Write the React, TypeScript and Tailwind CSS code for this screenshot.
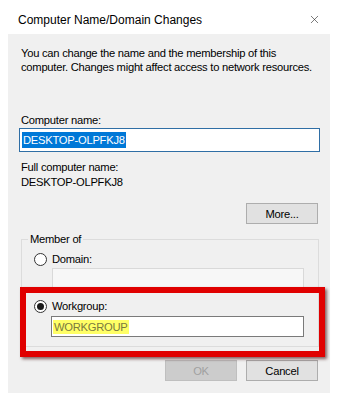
import { X } from 'lucide-react'

function Radio({ checked }: { checked?: boolean }) {
  return (
    <span className="flex h-[13px] w-[13px] items-center justify-center rounded-full border border-[#333333] bg-white">
      {checked && <span className="h-[7px] w-[7px] rounded-full bg-[#1a1a1a]" />}
    </span>
  )
}

function Button({ label, disabled }: { label: string; disabled?: boolean }) {
  return (
    <button
      disabled={disabled}
      className={
        disabled
          ? 'flex h-[21px] w-[72px] items-center justify-center border border-[#bfbfbf] bg-[#cccccc] text-[#a0a0a0]'
          : 'flex h-[21px] w-[72px] items-center justify-center border border-[#adadad] bg-[#e1e1e1] text-black'
      }
    >
      {label}
    </button>
  )
}

export default function App() {
  return (
    <div
      className="relative h-[402px] w-[339px] bg-white pl-[8px] pt-[5px] text-[11.2px] leading-[14px] tracking-[-0.25px] text-black"
      style={{ fontFamily: '"Liberation Sans", Arial, sans-serif' }}
    >
      <div className="flex w-[322px] flex-col">
        {/* title bar */}
        <div className="flex h-[29px] items-center justify-between bg-white pl-[10px] pr-[9px]">
          <span className="text-[12px] tracking-normal">Computer Name/Domain Changes</span>
          <X size={13} strokeWidth={1.1} className="text-[#222]" />
        </div>

        {/* body */}
        <div className="flex h-[359px] flex-col bg-[#f0f0f0] pl-[13px] pr-[12px] pt-[12px]">
          <p className="whitespace-nowrap">
            You can change the name and the membership of this
            <br />
            computer. Changes might affect access to network resources.
          </p>

          <div className="mt-[39px]">Computer name:</div>
          <div className="-ml-[2px] mt-[1px] flex h-[24px] w-[301px] items-center border border-[#2f6ea5] bg-white pl-[2px]">
            <span className="bg-[#0078d7] px-[1px] leading-[16px] text-white">DESKTOP-OLPFKJ8</span>
          </div>

          <div className="mt-[8px]">Full computer name:</div>
          <div className="mt-[1px]">DESKTOP-OLPFKJ8</div>

          <div className="mt-[14px] flex justify-end">
            <Button label="More..." />
          </div>

          <fieldset className="mt-[8px] w-[298px] border border-[#dcdcdc] pb-[9px]">
            <legend className="ml-[6px] px-[2px]">Member of</legend>
            <label className="ml-[12px] mt-[6px] flex items-center gap-[5px]">
              <Radio />
              <span>Domain:</span>
            </label>
            <div className="ml-[30px] mt-[2px] h-[21px] w-[252px] border border-[#d9d9d9] bg-[#f7f7f7]" />
            <label className="ml-[12px] mt-[10px] flex items-center gap-[5px]">
              <Radio checked />
              <span>Workgroup:</span>
            </label>
            <div className="ml-[29px] mt-[3px] flex h-[21px] w-[253px] items-center border border-[#7a7a7a] bg-white pl-[1px]">
              <span className="bg-[#ffff66] px-[1px] leading-[14px] text-[#7a7a3e]">WORKGROUP</span>
            </div>
          </fieldset>

          <div className="mt-[13px] flex justify-end gap-[9px]">
            <Button label="OK" disabled />
            <Button label="Cancel" />
          </div>
        </div>
      </div>

      {/* red annotation frame */}
      <div className="pointer-events-none absolute left-[20px] top-[287px] h-[70px] w-[305px] border-[6px] border-[#e00000] shadow-[2px_2px_3px_rgba(60,0,0,0.6)]" />
    </div>
  )
}
